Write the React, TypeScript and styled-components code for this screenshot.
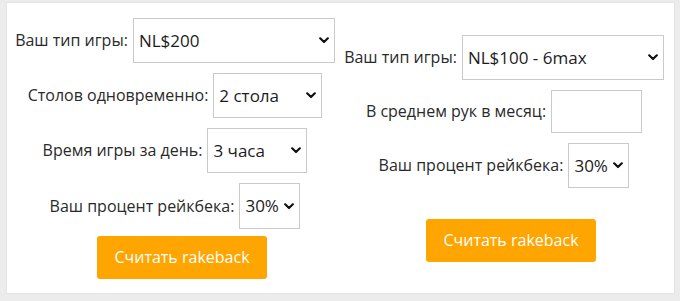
import React from "react";
import styled, { createGlobalStyle } from "styled-components";

const Global = createGlobalStyle`
  html, body { margin: 0; padding: 0; }
  body {
    background: #ececec;
    font-family: "Open Sans", "Liberation Sans", sans-serif;
    color: #2a2a2a;
  }
`;

const Frame = styled.div`
  width: 680px;
  height: 301px;
  box-sizing: border-box;
  padding: 2px 5px 7px 6px;
`;

const Panel = styled.div`
  height: 100%;
  box-sizing: border-box;
  background: #fff;
  border: 1px solid #e4e4e4;
  display: grid;
  grid-template-columns: 336px 322px;
  align-items: center;
`;

const Column = styled.div<{ $gap: number; $btnGap: number }>`
  display: flex;
  flex-direction: column;
  align-items: center;
  gap: ${(p) => p.$gap}px;
  & > button {
    margin-top: ${(p) => p.$btnGap - p.$gap}px;
  }
`;

const Row = styled.div`
  display: flex;
  align-items: center;
  gap: 5px;
`;

const Label = styled.label`
  font-size: 16px;
  color: #2a2a2a;
  white-space: nowrap;
`;

const SelectWrap = styled.div<{ $w: number; $h: number }>`
  position: relative;
  width: ${(p) => p.$w}px;
  height: ${(p) => p.$h}px;
`;

const Select = styled.select`
  appearance: none;
  -webkit-appearance: none;
  width: 100%;
  height: 100%;
  box-sizing: border-box;
  border: 1px solid #cacaca;
  border-radius: 0;
  background: #fff;
  font-family: "Open Sans", "Liberation Sans", sans-serif;
  font-size: 17px;
  color: #1c1c1c;
  padding: 0 0 0 5px;
  outline: none;
`;

const Chevron = styled.svg`
  position: absolute;
  right: 6px;
  top: 50%;
  width: 10px;
  height: 7px;
  margin-top: -3px;
  pointer-events: none;
`;

const Input = styled.input`
  width: 91px;
  height: 43px;
  box-sizing: border-box;
  border: 1px solid #cacaca;
  background: #fff;
  outline: none;
`;

const Button = styled.button`
  width: 170px;
  height: 43px;
  margin-left: 14px;
  border: none;
  border-radius: 3px;
  background: #ffa500;
  color: #fff;
  font-family: "Open Sans", "Liberation Sans", sans-serif;
  font-size: 16px;
  cursor: pointer;
`;

const Dropdown = ({ w, h, value, options }: { w: number; h: number; value: string; options: string[] }) => (
  <SelectWrap $w={w} $h={h}>
    <Select defaultValue={value}>
      {options.map((o) => (
        <option key={o}>{o}</option>
      ))}
    </Select>
    <Chevron viewBox="0 0 10 7">
      <path d="M1.2 1.3 L5 5 L8.8 1.3" fill="none" stroke="#111" strokeWidth="2.2" strokeLinecap="round" strokeLinejoin="round" />
    </Chevron>
  </SelectWrap>
);

export default function App() {
  return (
    <>
      <Global />
      <Frame>
        <Panel>
          <Column $gap={10} $btnGap={7}>
            <Row>
              <Label>Ваш тип игры:</Label>
              <Dropdown w={202} h={45} value="NL$200" options={["NL$200", "NL$100", "NL$50"]} />
            </Row>
            <Row>
              <Label>Столов одновременно:</Label>
              <Dropdown w={109} h={45} value="2 стола" options={["1 стол", "2 стола", "3 стола"]} />
            </Row>
            <Row>
              <Label>Время игры за день:</Label>
              <Dropdown w={100} h={45} value="3 часа" options={["1 час", "2 часа", "3 часа"]} />
            </Row>
            <Row>
              <Label>Ваш процент рейкбека:</Label>
              <Dropdown w={61} h={46} value="30%" options={["20%", "30%", "40%"]} />
            </Row>
            <Button>Считать rakeback</Button>
          </Column>
          <Column $gap={10} $btnGap={31}>
            <Row>
              <Label>Ваш тип игры:</Label>
              <Dropdown w={202} h={45} value="NL$100 - 6max" options={["NL$100 - 6max", "NL$200"]} />
            </Row>
            <Row>
              <Label>В среднем рук в месяц:</Label>
              <Input type="text" />
            </Row>
            <Row>
              <Label>Ваш процент рейкбека:</Label>
              <Dropdown w={61} h={45} value="30%" options={["20%", "30%", "40%"]} />
            </Row>
            <Button>Считать rakeback</Button>
          </Column>
        </Panel>
      </Frame>
    </>
  );
}
